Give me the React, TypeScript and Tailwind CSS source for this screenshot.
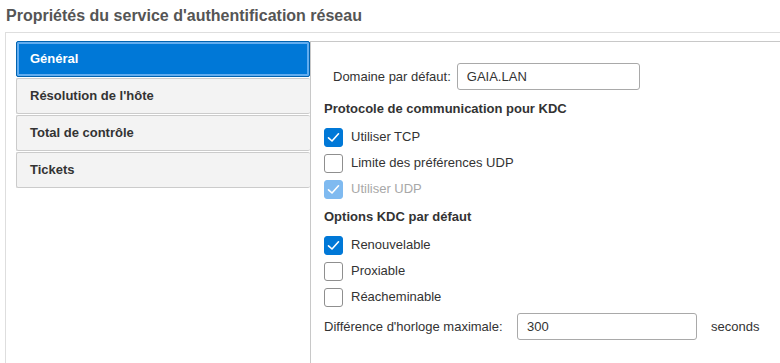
import { useState } from 'react';

type Tab = { id: string; label: string };

const tabs: Tab[] = [
  { id: 'general', label: 'Général' },
  { id: 'resolution', label: "Résolution de l'hôte" },
  { id: 'checksum', label: 'Total de contrôle' },
  { id: 'tickets', label: 'Tickets' },
];

function Checkbox({
  label,
  checked,
  disabled = false,
}: {
  label: string;
  checked: boolean;
  disabled?: boolean;
}) {
  const boxClass = checked
    ? disabled
      ? 'border-[#7fbaf0] bg-[#7fbaf0]'
      : 'border-[#0078d7] bg-[#0078d7]'
    : 'border-[#8f8f8f] bg-white';

  return (
    <label className="flex h-[26px] items-center gap-2">
      <span
        className={`flex h-[19px] w-[19px] shrink-0 items-center justify-center rounded-[3px] border ${boxClass}`}
      >
        {checked && (
          <svg width="15" height="15" viewBox="0 0 15 15" fill="none">
            <path
              d="M2.5 7.8 L6 11 L12.5 3.8"
              stroke="white"
              strokeWidth="1.6"
              strokeLinecap="round"
              strokeLinejoin="round"
            />
          </svg>
        )}
      </span>
      <span className={disabled ? 'text-[#a8a8a8]' : 'text-[#333]'}>{label}</span>
    </label>
  );
}

export default function App() {
  const [activeTab, setActiveTab] = useState('general');

  return (
    <div className="flex h-[363px] w-[780px] flex-col overflow-hidden bg-white font-['Liberation_Sans',Arial,sans-serif] text-[13px] text-[#333]">
      <h1 className="px-[6px] pt-[5px] text-[16px] font-bold leading-[22px] text-[#555]">
        Propriétés du service d'authentification réseau
      </h1>

      <div className="ml-[5px] mt-[5px] flex flex-1 border-l border-t border-[#dedede] pl-[10px] pt-[8px]">
        <div className="flex w-[294px] shrink-0 flex-col">
          {tabs.map((tab) => {
            const active = tab.id === activeTab;
            return (
              <button
                key={tab.id}
                onClick={() => setActiveTab(tab.id)}
                className={
                  active
                    ? 'flex h-[36px] items-center rounded-[2px] border border-[#0063b1] bg-[#0078d7] pl-[13px] text-left font-bold text-white shadow-[inset_0_0_0_2px_#62adf0]'
                    : 'mt-px flex h-[36px] items-center rounded-[2px] border border-[#cbcbcb] border-r-0 bg-[#f3f3f3] pl-[13px] text-left font-bold text-[#333]'
                }
              >
                {tab.label}
              </button>
            );
          })}
        </div>

        <div className="flex flex-1 flex-col border-l border-t border-[#c8c8c8] pl-[13px] pt-[21px]">
          <div className="flex h-[27px] items-center pl-[9px]">
            <span className="mr-[6px]">Domaine par défaut:</span>
            <div className="flex h-[27px] w-[183px] items-center rounded-[3px] border border-[#a9a9a9] pl-[9px]">
              GAIA.LAN
            </div>
          </div>

          <div className="mt-[11px] font-bold leading-[16px]">
            Protocole de communication pour KDC
          </div>
          <div className="mt-[7px] flex flex-col">
            <Checkbox label="Utiliser TCP" checked />
            <Checkbox label="Limite des préférences UDP" checked={false} />
            <Checkbox label="Utiliser UDP" checked disabled />
          </div>

          <div className="mt-[7px] font-bold leading-[16px]">Options KDC par défaut</div>
          <div className="mt-[7px] flex flex-col">
            <Checkbox label="Renouvelable" checked />
            <Checkbox label="Proxiable" checked={false} />
            <Checkbox label="Réacheminable" checked={false} />
          </div>

          <div className="mt-[3px] flex h-[27px] items-center">
            <span className="w-[193px]">Différence d'horloge maximale:</span>
            <div className="flex h-[27px] w-[180px] items-center rounded-[3px] border border-[#a9a9a9] pl-[9px]">
              300
            </div>
            <span className="ml-[14px]">seconds</span>
          </div>
        </div>
      </div>
    </div>
  );
}
